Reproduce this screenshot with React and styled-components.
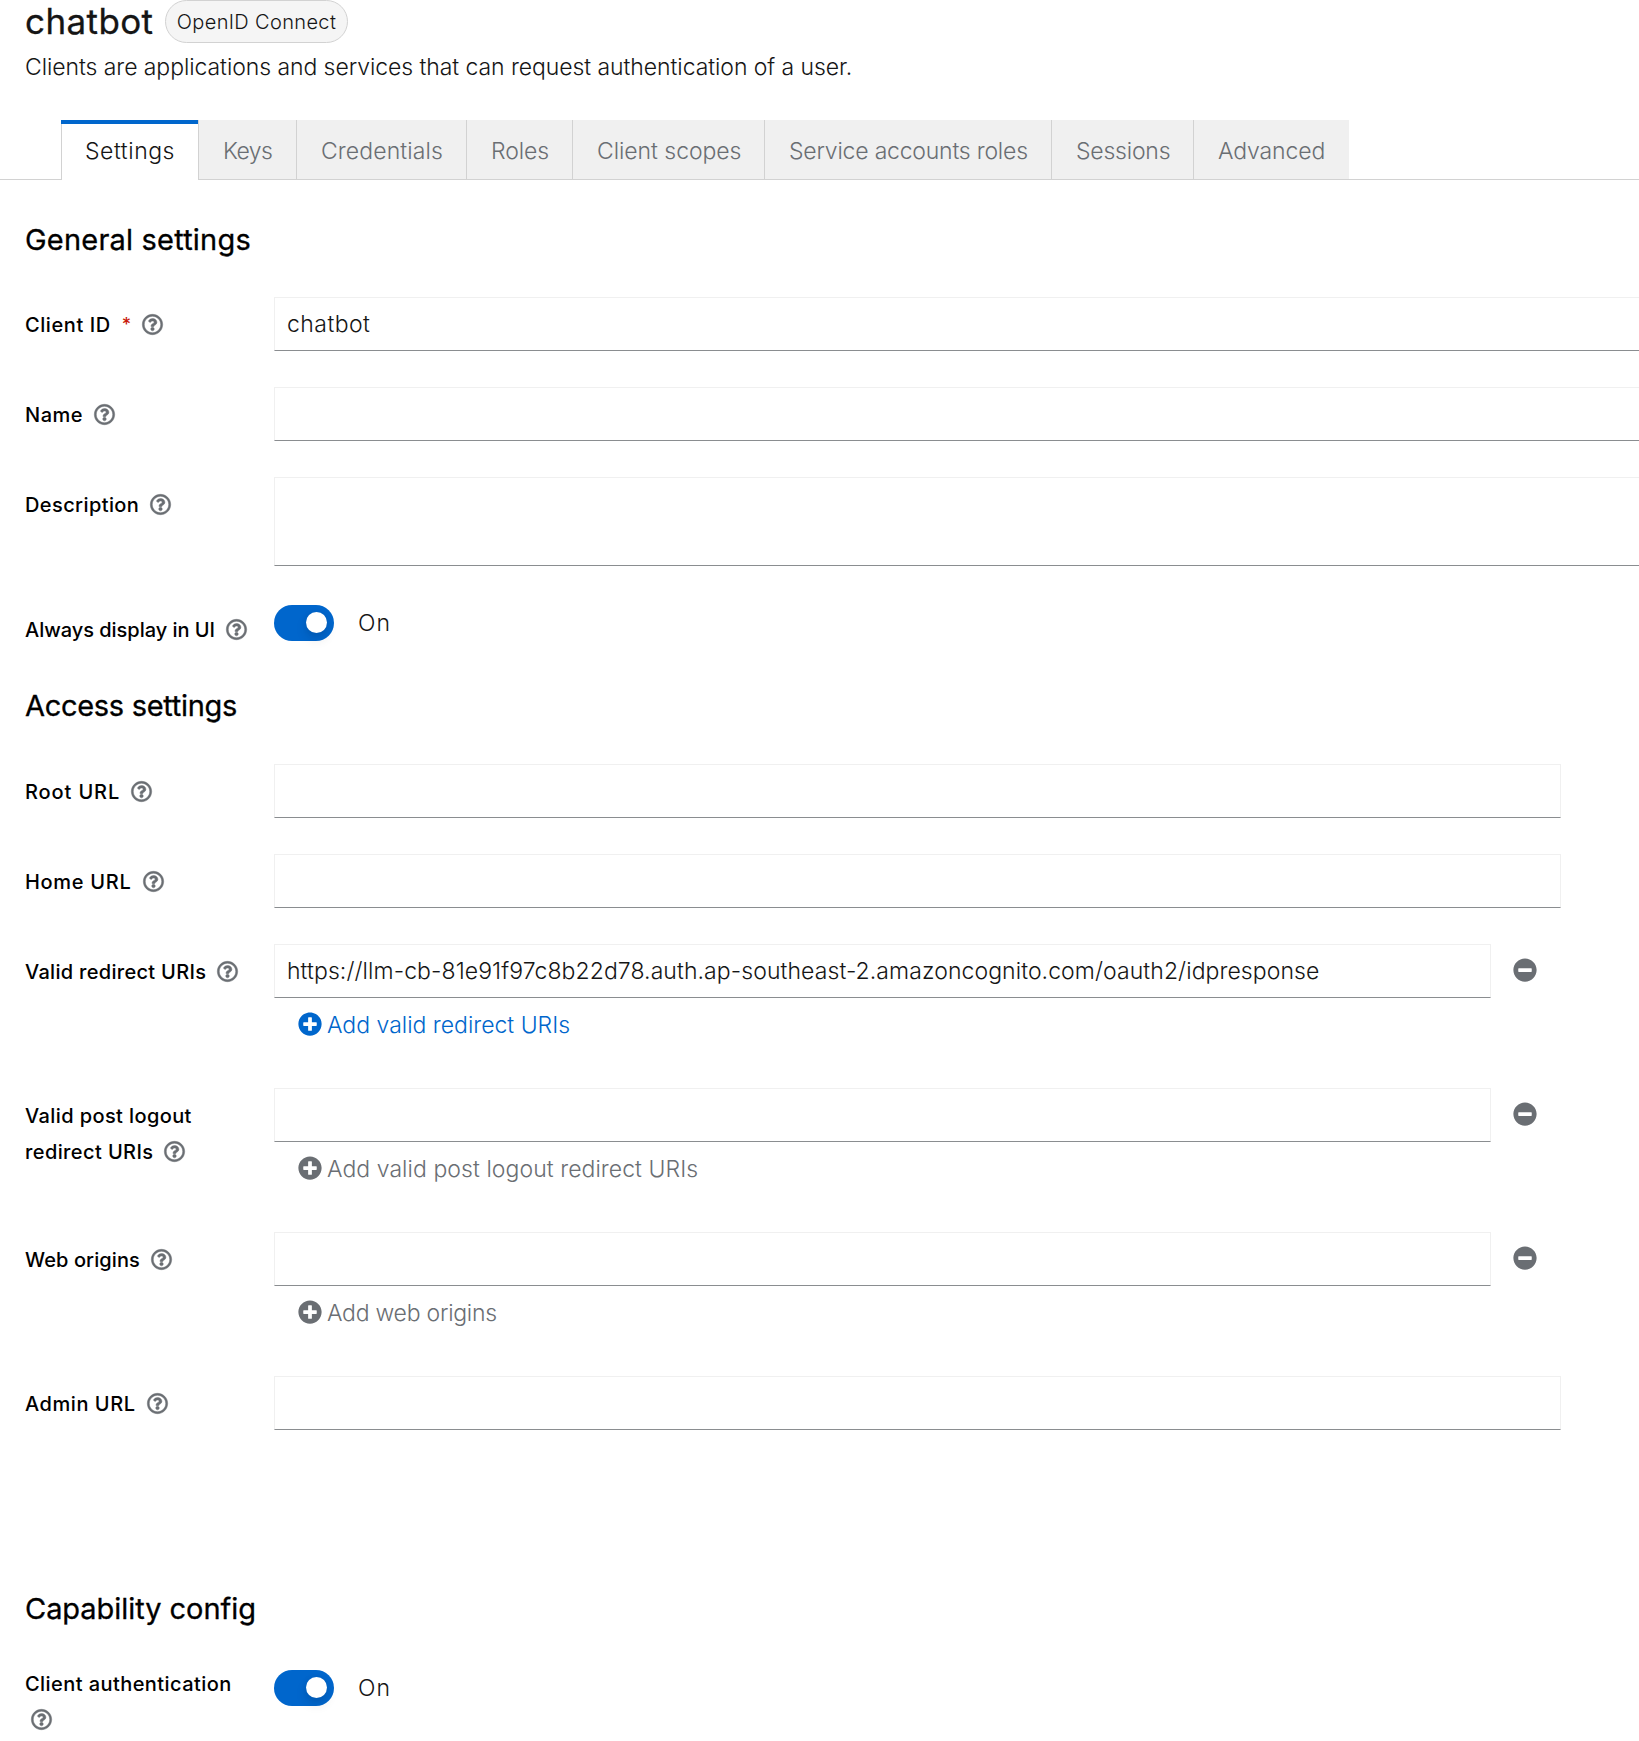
import React from "react";
import styled, { createGlobalStyle } from "styled-components";
import { FaMinusCircle, FaPlusCircle, FaRegQuestionCircle } from "react-icons/fa";

const tabs = [
  { name: "Settings", width: 138, tracking: 0.54 },
  { name: "Keys", width: 98, tracking: -0.52 },
  { name: "Credentials", width: 170, tracking: 0.11 },
  { name: "Roles", width: 106, tracking: -0.1 },
  { name: "Client scopes", width: 192, tracking: -0.05 },
  { name: "Service accounts roles", width: 287, tracking: -0.21 },
  { name: "Sessions", width: 142, tracking: -0.21 },
  { name: "Advanced", width: 155, tracking: -0.12 },
];

function Field({ lines, required, children, $gap }) {
  return (
    <Row $gap={$gap}>
      <Label>
        {lines.map((line, i) => (
          <LabelLine key={i}>
            {line.text && <LabelText $tracking={line.tracking}>{line.text}</LabelText>}
            {required && <Required>*</Required>}
            {i === lines.length - 1 && (
              <Help $alone={!line.text}>
                <FaRegQuestionCircle />
              </Help>
            )}
          </LabelLine>
        ))}
      </Label>
      <Control>{children}</Control>
    </Row>
  );
}

function Toggle({ $top }) {
  const [on, setOn] = React.useState(true);
  return (
    <ToggleRow $top={$top}>
      <Track type="button" role="switch" aria-checked={on} $on={on} onClick={() => setOn(!on)}>
        <Knob />
      </Track>
      <span>{on ? "On" : "Off"}</span>
    </ToggleRow>
  );
}

function MultiInput({ value, tracking, add, addTracking, disabled }) {
  return (
    <>
      <InputGroup>
        <Input type="text" defaultValue={value} $tracking={tracking} />
        <Remove type="button">
          <FaMinusCircle />
        </Remove>
      </InputGroup>
      <Add type="button" disabled={disabled} $tracking={addTracking}>
        <FaPlusCircle />
        <span>{add}</span>
      </Add>
    </>
  );
}

export default function App() {
  return (
    <>
      <GlobalStyle />
      <Page>
        <Header>
          <TitleRow>
            <h1>chatbot</h1>
            <Badge>OpenID Connect</Badge>
          </TitleRow>
          <p>Clients are applications and services that can request authentication of a user.</p>
        </Header>

        <Tabs>
          {tabs.map((tab, i) => (
            <Tab key={tab.name} $active={i === 0} $width={tab.width} $tracking={tab.tracking}>
              {tab.name}
            </Tab>
          ))}
        </Tabs>

        <Section $top={40} $overflow={20}>
          <Heading $tracking={0.2} $bottom={38}>General settings</Heading>
          <Field lines={[{ text: "Client ID", tracking: 0.57 }]} required>
            <Input type="text" defaultValue="chatbot" $tracking={0.45} />
          </Field>
          <Field lines={[{ text: "Name", tracking: 0.5 }]}>
            <Input type="text" />
          </Field>
          <Field lines={[{ text: "Description", tracking: 0.4 }]}>
            <TextArea />
          </Field>
          <Field lines={[{ text: "Always display in UI", tracking: -0.03 }]} $gap={0}>
            <Toggle $top={3} />
          </Field>
        </Section>

        <Section $top={38} $right={78}>
          <Heading $tracking={-0.3} $bottom={39}>Access settings</Heading>
          <Field lines={[{ text: "Root URL", tracking: 0.88 }]}>
            <Input type="text" />
          </Field>
          <Field lines={[{ text: "Home URL", tracking: 0.7 }]}>
            <Input type="text" />
          </Field>
          <Field lines={[{ text: "Valid redirect URIs", tracking: 0.3 }]}>
            <MultiInput
              value="https://llm-cb-81e91f97c8b22d78.auth.ap-southeast-2.amazoncognito.com/oauth2/idpresponse"
              tracking={0.08}
              add="Add valid redirect URIs"
              addTracking={0}
            />
          </Field>
          <Field
            lines={[
              { text: "Valid post logout", tracking: 0.4 },
              { text: "redirect URIs", tracking: 0.4 },
            ]}
          >
            <MultiInput add="Add valid post logout redirect URIs" addTracking={0.06} disabled />
          </Field>
          <Field lines={[{ text: "Web origins", tracking: 0.1 }]}>
            <MultiInput add="Add web origins" addTracking={-0.25} disabled />
          </Field>
          <Field lines={[{ text: "Admin URL", tracking: 0.55 }]} $gap={0}>
            <Input type="text" />
          </Field>
        </Section>

        <Section $top={159}>
          <Heading $tracking={-0.05} $bottom={28}>Capability config</Heading>
          <Field lines={[{ text: "Client authentication", tracking: 0.43 }, {}]} $gap={0}>
            <Toggle $top={14} />
          </Field>
        </Section>
      </Page>
    </>
  );
}

const GlobalStyle = createGlobalStyle`
  * {
    box-sizing: border-box;
  }
  body {
    margin: 0;
    background: #ffffff;
    color: #151515;
    font-family: Inter, "Liberation Sans", sans-serif;
    font-weight: 300;
    font-size: 23px;
    line-height: 36px;
  }
  h1, h2, p {
    margin: 0;
  }
  button, input, textarea {
    font: inherit;
    color: inherit;
    margin: 0;
  }
`;

const Page = styled.div`
  width: 100%;
  height: 1741px;
  overflow: hidden;
`;

const Header = styled.header`
  padding-left: 25px;
  p {
    margin-top: 6px;
    letter-spacing: -0.07px;
  }
`;

const TitleRow = styled.div`
  display: flex;
  align-items: center;
  height: 43px;
  h1 {
    width: 140px;
    font-weight: 400;
    font-size: 35px;
    line-height: 43px;
    letter-spacing: 0.4px;
    -webkit-text-stroke: 0.3px;
  }
`;

const Badge = styled.span`
  width: 183px;
  height: 43px;
  border: 1px solid #d2d2d2;
  border-radius: 22px;
  background: #f5f5f5;
  font-size: 20px;
  line-height: 42px;
  letter-spacing: 0.35px;
  text-align: center;
`;

const Tabs = styled.nav`
  display: flex;
  height: 60px;
  margin-top: 35px;
  &::before {
    content: "";
    width: 61px;
    border-bottom: 1px solid #d2d2d2;
  }
  &::after {
    content: "";
    flex: 1;
    border-bottom: 1px solid #d2d2d2;
  }
`;

const Tab = styled.a`
  width: ${(p) => p.$width}px;
  padding-top: 13px;
  padding-left: 24px;
  background: ${(p) => (p.$active ? "#ffffff" : "#f0f0f0")};
  color: ${(p) => (p.$active ? "#151515" : "#6a6e73")};
  border: 0 solid #d2d2d2;
  border-right-width: 1px;
  border-bottom-width: ${(p) => (p.$active ? 0 : 1)}px;
  box-shadow: ${(p) => (p.$active ? "inset 0 4px #0066cc, inset 1px 0 #d2d2d2" : "none")};
  letter-spacing: ${(p) => p.$tracking}px;
  white-space: nowrap;
  cursor: pointer;
  &:last-child {
    border-right-width: 0;
  }
`;

const Section = styled.section`
  padding-top: ${(p) => p.$top}px;
  padding-left: 25px;
  padding-right: ${(p) => p.$right || 0}px;
  margin-right: -${(p) => p.$overflow || 0}px;
`;

const Heading = styled.h2`
  color: #000000;
  font-weight: 400;
  font-size: 29px;
  line-height: 39px;
  letter-spacing: ${(p) => p.$tracking}px;
  -webkit-text-stroke: 0.3px;
  margin-bottom: ${(p) => p.$bottom}px;
`;

const Row = styled.div`
  display: flex;
  align-items: flex-start;
  margin-bottom: ${(p) => p.$gap ?? 36}px;
`;

const Label = styled.div`
  flex: none;
  width: 249px;
  padding-top: 10px;
  color: #000000;
  font-size: 20px;
  font-weight: 500;
`;

const LabelLine = styled.div`
  display: flex;
  align-items: center;
  height: 36px;
`;

const LabelText = styled.span`
  letter-spacing: ${(p) => p.$tracking}px;
  white-space: nowrap;
`;

const Required = styled.span`
  margin-left: 11px;
  color: #c9190b;
  font-size: 18px;
`;

const Help = styled.span`
  display: flex;
  margin-left: ${(p) => (p.$alone ? 6 : 11)}px;
  margin-top: -1px;
  color: #6a6e73;
  font-size: 21px;
  svg {
    overflow: visible;
    stroke-width: 12;
  }
`;

const Control = styled.div`
  flex: 1;
  min-width: 0;
`;

const Input = styled.input`
  display: block;
  width: 100%;
  height: 54px;
  padding: 0 12px;
  border: 1px solid #f0f0f0;
  border-bottom-color: #8a8d90;
  border-radius: 0;
  background: #ffffff;
  letter-spacing: ${(p) => p.$tracking || 0}px;
  outline: none;
`;

const TextArea = styled(Input).attrs({ as: "textarea" })`
  height: 89px;
  resize: none;
`;

const InputGroup = styled.div`
  display: flex;
`;

const Remove = styled.button`
  flex: none;
  display: flex;
  align-items: center;
  width: 70px;
  height: 52px;
  padding: 0 0 0 22px;
  border: none;
  background: none;
  color: #6a6e73;
  font-size: 24px;
`;

const Add = styled.button`
  display: flex;
  align-items: center;
  gap: 5px;
  height: 54px;
  padding: 0 24px;
  border: none;
  background: none;
  color: ${(p) => (p.disabled ? "#6a6e73" : "#0066cc")};
  letter-spacing: ${(p) => p.$tracking}px;
  svg {
    font-size: 24px;
    margin-top: -2px;
  }
`;

const ToggleRow = styled.div`
  display: flex;
  align-items: center;
  gap: 24px;
  padding-top: ${(p) => p.$top}px;
  span {
    letter-spacing: 1px;
  }
`;

const Track = styled.button`
  display: flex;
  align-items: center;
  justify-content: ${(p) => (p.$on ? "flex-end" : "flex-start")};
  width: 60px;
  height: 36px;
  padding: 0 7px 1px;
  border: none;
  border-radius: 18px;
  background: ${(p) => (p.$on ? "#0066cc" : "#8a8d90")};
`;

const Knob = styled.i`
  width: 21px;
  height: 21px;
  border-radius: 50%;
  background: #ffffff;
  box-shadow: 0 6px 12px rgba(3, 3, 3, 0.12), 0 0 6px rgba(3, 3, 3, 0.06);
`;
